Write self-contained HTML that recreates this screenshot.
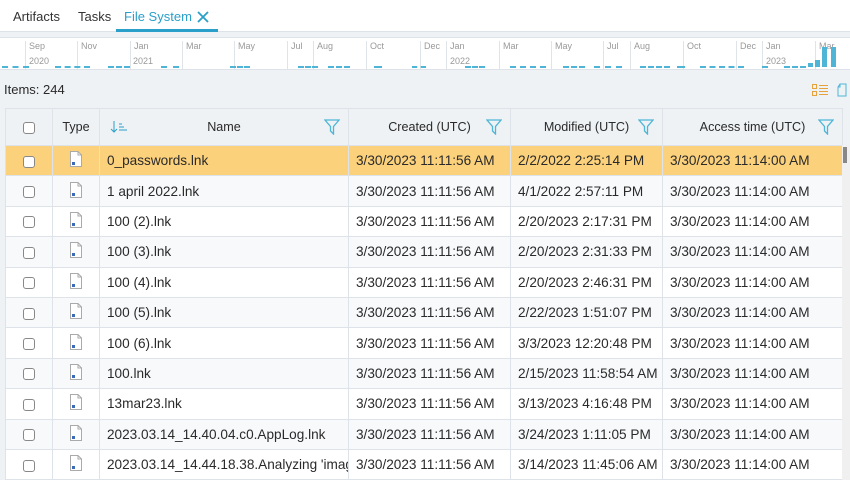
<!DOCTYPE html>
<html><head><meta charset="utf-8"><style>
*{margin:0;padding:0;box-sizing:border-box}
body{width:850px;height:480px;overflow:hidden;background:#eef2f5;font-family:"Segoe UI","Liberation Sans",sans-serif;color:#2a2a2a;position:relative}
.tabs{position:absolute;left:0;top:0;width:850px;height:32px;background:#fff;border-bottom:1px solid #dde3e8}
.tab{position:absolute;top:9px;font-size:13px;color:#333}
.tl{position:absolute;left:0;top:37px;width:850px;height:33px;background:#fff;border-top:1px solid #dde3e8;border-bottom:1px solid #dde3e8;overflow:hidden}
.m{position:absolute;top:3px;font-size:9px;color:#999;padding-left:3px;border-left:1px solid #dfe4e8;height:28px;line-height:10px}
.y{position:absolute;top:18px;font-size:9px;color:#999}
.d{position:absolute;top:28px;height:2px;border-top:2px dashed #4fb5d6}
.b{position:absolute;bottom:2px;width:5px;background:#4fb5d6}
.items{position:absolute;left:4px;top:82px;font-size:13px}
table{position:absolute;left:5px;top:108px;border-collapse:collapse;table-layout:fixed;width:837px}
td,th{border:1px solid #dde3e8;height:30.4px;font-size:13.6px;white-space:nowrap;overflow:hidden;font-weight:normal}
th{height:37px;background:#eef2f5;position:relative;font-size:12.6px}
td{padding-left:7px;background:#fff}
tr.alt td{background:#f7f9fb}
tr.hl td{background:#fcd17b}
.cb{display:inline-block;width:12px;height:12px;border:1px solid #888;border-radius:3px;background:#fff;vertical-align:middle}
.c0{text-align:center;padding:0}
.fil{position:absolute;right:8px;top:10px}
</style></head><body>
<div class="tabs">
<span class="tab" style="left:13px">Artifacts</span>
<span class="tab" style="left:78px">Tasks</span>
<span class="tab" style="left:124px;color:#2a9fc9">File System</span>
<svg style="position:absolute;left:197px;top:11px" width="12" height="12"><path d="M1 1L11 11M11 1L1 11" stroke="#2a9fc9" stroke-width="1.8"/></svg>
<div style="position:absolute;left:116px;top:29px;width:102px;height:3px;background:#2a9fc9"></div>
</div>
<div class="tl">
<div class="m" style="left:25px">Sep</div><div class="m" style="left:77px">Nov</div><div class="m" style="left:130px">Jan</div><div class="m" style="left:182px">Mar</div><div class="m" style="left:234px">May</div><div class="m" style="left:287px">Jul</div><div class="m" style="left:313px">Aug</div><div class="m" style="left:366px">Oct</div><div class="m" style="left:420px">Dec</div><div class="m" style="left:446px">Jan</div><div class="m" style="left:499px">Mar</div><div class="m" style="left:551px">May</div><div class="m" style="left:603px">Jul</div><div class="m" style="left:630px">Aug</div><div class="m" style="left:683px">Oct</div><div class="m" style="left:736px">Dec</div><div class="m" style="left:762px">Jan</div><div class="m" style="left:815px">Mar</div>
<div class="y" style="left:29px">2020</div><div class="y" style="left:133px">2021</div><div class="y" style="left:450px">2022</div><div class="y" style="left:766px">2023</div>
<div class="d" style="left:2px;width:27px"></div><div class="d" style="left:55px;width:35px"></div><div class="d" style="left:108px;width:22px"></div><div class="d" style="left:161px;width:18px"></div><div class="d" style="left:230px;width:20px"></div><div class="d" style="left:298px;width:20px"></div><div class="d" style="left:328px;width:22px"></div><div class="d" style="left:374px;width:8px"></div><div class="d" style="left:412px;width:14px"></div><div class="d" style="left:465px;width:20px"></div><div class="d" style="left:510px;width:36px"></div><div class="d" style="left:563px;width:22px"></div><div class="d" style="left:594px;width:28px"></div><div class="d" style="left:640px;width:30px"></div><div class="d" style="left:677px;width:8px"></div><div class="d" style="left:700px;width:44px"></div><div class="d" style="left:762px;width:6px"></div><div class="d" style="left:784px;width:22px"></div>
<div class="b" style="left:808px;height:4px"></div><div class="b" style="left:815px;height:7px"></div><div class="b" style="left:822px;height:20px"></div><div class="b" style="left:831px;height:20px"></div>
</div>
<div class="items">Items: 244</div>
<svg style="position:absolute;left:812px;top:84px" width="17" height="13"><rect x="0.5" y="0.5" width="4" height="4" fill="none" stroke="#e8a23c"/><rect x="0.5" y="7.5" width="4" height="4" fill="none" stroke="#e8a23c"/><path d="M7 1.5H16M7 4.5H16M7 7.5H16M7 10.5H16" stroke="#e8a23c"/></svg>
<svg style="position:absolute;left:837px;top:83px" width="11" height="14"><path d="M3 1H9V13H1V4Z" fill="none" stroke="#4fb5d6"/><path d="M3 1V4H1" fill="none" stroke="#4fb5d6"/></svg>
<table>
<colgroup><col style="width:47px"><col style="width:47px"><col style="width:249px"><col style="width:162px"><col style="width:152px"><col style="width:180px"></colgroup>
<tr><th><span class="cb"></span></th><th>Type</th><th><svg style="position:absolute;left:10px;top:11px" width="18" height="14"><path d="M4 1V12M1 9L4 12L7 9M9 4H12M9 7H14M9 10H17" stroke="#2a9fc9" fill="none"/></svg>Name<svg class="fil" width="16" height="16"><path d="M1 1H15L9.5 7.5V15L6.5 12V7.5Z" fill="none" stroke="#4fb5d6" stroke-width="1.3"/></svg></th><th>Created (UTC)<svg class="fil" width="16" height="16"><path d="M1 1H15L9.5 7.5V15L6.5 12V7.5Z" fill="none" stroke="#4fb5d6" stroke-width="1.3"/></svg></th><th>Modified (UTC)<svg class="fil" width="16" height="16"><path d="M1 1H15L9.5 7.5V15L6.5 12V7.5Z" fill="none" stroke="#4fb5d6" stroke-width="1.3"/></svg></th><th>Access time (UTC)<svg class="fil" width="16" height="16"><path d="M1 1H15L9.5 7.5V15L6.5 12V7.5Z" fill="none" stroke="#4fb5d6" stroke-width="1.3"/></svg></th></tr>
<tbody id="tb"></tbody>
</table>
<div style="position:absolute;left:842px;top:145px;width:8px;height:335px;background:#f0f0f0"></div>
<div style="position:absolute;left:843px;top:147px;width:4px;height:16px;background:#888"></div>
<script>
var r=[["0_passwords.lnk","2/2/2022 2:25:14 PM"],["1 april 2022.lnk","4/1/2022 2:57:11 PM"],["100 (2).lnk","2/20/2023 2:17:31 PM"],["100 (3).lnk","2/20/2023 2:31:33 PM"],["100 (4).lnk","2/20/2023 2:46:31 PM"],["100 (5).lnk","2/22/2023 1:51:07 PM"],["100 (6).lnk","3/3/2023 12:20:48 PM"],["100.lnk","2/15/2023 11:58:54 AM"],["13mar23.lnk","3/13/2023 4:16:48 PM"],["2023.03.14_14.40.04.c0.AppLog.lnk","3/24/2023 1:11:05 PM"],["2023.03.14_14.44.18.38.Analyzing 'imag","3/14/2023 11:45:06 AM"]];
var ic='<svg width="14" height="16"><path d="M1.5 0.5H9L12.5 4V15.5H1.5Z" fill="#fff" stroke="#aaa"/><path d="M9 0.5V4H12.5" fill="none" stroke="#aaa"/><rect x="3" y="11" width="3" height="3" fill="#3a6ab8"/></svg>';
var h='';r.forEach(function(x,i){h+='<tr class="'+(i==0?'hl':(i%2?'alt':''))+'"><td class="c0"><span class="cb"></span></td><td class="c0">'+ic+'</td><td>'+x[0]+'</td><td>3/30/2023 11:11:56 AM</td><td>'+x[1]+'</td><td>3/30/2023 11:14:00 AM</td></tr>'});
document.getElementById('tb').innerHTML=h;
</script>
</body></html>
